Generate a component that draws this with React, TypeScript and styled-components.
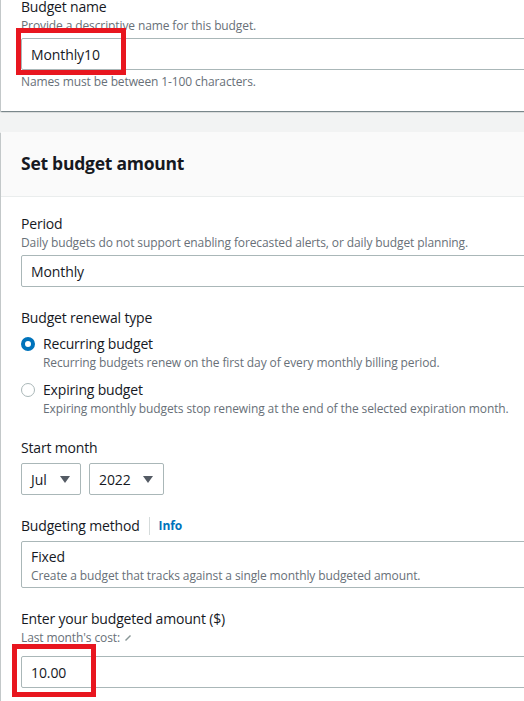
import React from "react";
import styled, { createGlobalStyle } from "styled-components";

const Global = createGlobalStyle`
  html, body {
    margin: 0;
    padding: 0;
    background: #f2f3f3;
    overflow: hidden;
  }
  body {
    font-family: "Open Sans", "Noto Sans", Arial, sans-serif;
    color: #16191f;
    -webkit-font-smoothing: antialiased;
  }
`;

const Page = styled.div`
  width: 640px;
  padding-left: 1px;
  display: flex;
  flex-direction: column;
  gap: 21px;
`;

const Card = styled.section<{ $top?: number }>`
  background: #ffffff;
  margin-top: ${(p) => p.$top ?? 0}px;
  box-shadow: 0 1px 1px 0 rgba(0, 28, 36, 0.3),
    1px 1px 1px 0 rgba(0, 28, 36, 0.15),
    -1px 1px 1px 0 rgba(0, 28, 36, 0.15);
`;

const CardHeader = styled.header`
  height: 64px;
  display: flex;
  align-items: center;
  padding: 0 20px;
  background: #fafafa;
  border-bottom: 1px solid #eaeded;
`;

const Title = styled.h2`
  margin: 0;
  font-size: 17.5px;
  letter-spacing: -0.25px;
  line-height: 24px;
  font-weight: 700;
  color: #16191f;
  transform: translateY(-1px);
`;

const CardBody = styled.div<{ $pt: number; $pb: number }>`
  padding: ${(p) => p.$pt}px 20px ${(p) => p.$pb}px 20px;
  display: flex;
  flex-direction: column;
  gap: 20px;
`;

const Field = styled.div`
  display: flex;
  flex-direction: column;
`;

const LabelRow = styled.div`
  display: flex;
  align-items: center;
`;

const Label = styled.label`
  font-size: 14px;
  letter-spacing: -0.18px;
  line-height: 22px;
  color: #16191f;
`;

const Divider = styled.span`
  width: 1px;
  height: 18px;
  background: #d5dbdb;
  margin: 0 9px 0 9px;
`;

const InfoLink = styled.a`
  font-size: 12px;
  font-weight: 700;
  letter-spacing: -0.1px;
  line-height: 22px;
  color: #0073bb;
  text-decoration: none;
`;

const Desc = styled.div<{ $h?: number }>`
  font-size: 12px;
  letter-spacing: -0.11px;
  line-height: 16px;
  color: #687078;
  display: flex;
  align-items: flex-start;
  gap: 5px;
  height: ${(p) => (p.$h ? `${p.$h}px` : "auto")};
`;

const Constraint = styled.div`
  font-size: 12px;
  letter-spacing: -0.11px;
  line-height: 16px;
  color: #687078;
  margin-top: 4px;
`;

const Control = styled.div`
  position: relative;
  margin-top: 4px;
`;

const Input = styled.div`
  height: 32px;
  box-sizing: border-box;
  border: 1px solid #aab7b8;
  border-radius: 2px;
  padding: 0 9px;
  display: flex;
  align-items: center;
  font-size: 14px;
  letter-spacing: -0.1px;
  color: #16191f;
  background: #fff;
`;

const Highlight = styled.div<{ $l: number; $t: number; $w: number; $h: number }>`
  position: absolute;
  left: ${(p) => p.$l}px;
  top: ${(p) => p.$t}px;
  width: ${(p) => p.$w}px;
  height: ${(p) => p.$h}px;
  box-sizing: border-box;
  border: 5px solid #e8161f;
  pointer-events: none;
`;

const RadioGroup = styled.div`
  display: flex;
  flex-direction: column;
  gap: 8px;
  margin-top: 4px;
`;

const RadioItem = styled.div`
  display: grid;
  grid-template-columns: 14px 1fr;
  column-gap: 8px;
`;

const RadioDot = styled.span<{ $checked?: boolean }>`
  width: 14px;
  height: 14px;
  box-sizing: border-box;
  border-radius: 50%;
  margin-top: 4px;
  border: ${(p) => (p.$checked ? "4px solid #0073bb" : "1px solid #aab7b8")};
  background: #fff;
`;

const RadioText = styled.div`
  display: flex;
  flex-direction: column;
`;

const RadioLabel = styled.span`
  font-size: 14px;
  letter-spacing: -0.18px;
  line-height: 22px;
  color: #16191f;
`;

const SelectRow = styled.div`
  display: flex;
  gap: 8px;
  margin-top: 4px;
`;

const Select = styled.div<{ $w: number }>`
  width: ${(p) => p.$w}px;
  height: 32px;
  box-sizing: border-box;
  border: 1px solid #aab7b8;
  border-radius: 2px;
  padding: 0 10px 0 9px;
  display: flex;
  align-items: center;
  justify-content: space-between;
  font-size: 14px;
  letter-spacing: -0.1px;
  color: #16191f;
`;

const Caret = styled.svg`
  width: 10px;
  height: 7px;
  flex: none;
`;

const Tile = styled.div`
  margin-top: 4px;
  border: 1px solid #aab7b8;
  border-radius: 2px;
  padding: 4px 9px 3px;
  display: flex;
  flex-direction: column;
`;

const TileTitle = styled.span`
  font-size: 14px;
  letter-spacing: -0.1px;
  line-height: 22px;
  color: #16191f;
`;

const PencilIcon = styled.svg`
  width: 6px;
  height: 6px;
  margin-top: 5px;
`;

const CaretIcon = () => (
  <Caret viewBox="0 0 10 7">
    <path d="M0 0 H10 L5 7 Z" fill="#545b64" />
  </Caret>
);

export default function App() {
  return (
    <>
      <Global />
      <Page>
        <Card $top={-24}>
          <CardBody $pt={20} $pb={21}>
            <Field>
              <Label>Budget name</Label>
              <Desc>Provide a descriptive name for this budget.</Desc>
              <Control>
                <Input>Monthly10</Input>
                <Highlight $l={-5} $t={-10} $w={110} $h={47} />
              </Control>
              <Constraint>Names must be between 1-100 characters.</Constraint>
            </Field>
          </CardBody>
        </Card>

        <Card>
          <CardHeader>
            <Title>Set budget amount</Title>
          </CardHeader>
          <CardBody $pt={16} $pb={20}>
            <Field>
              <Label>Period</Label>
              <Desc>
                Daily budgets do not support enabling forecasted alerts, or daily
                budget planning.
              </Desc>
              <Control>
                <Input>Monthly</Input>
              </Control>
            </Field>

            <Field>
              <Label>Budget renewal type</Label>
              <RadioGroup>
                <RadioItem>
                  <RadioDot $checked />
                  <RadioText>
                    <RadioLabel>Recurring budget</RadioLabel>
                    <Desc>
                      Recurring budgets renew on the first day of every monthly
                      billing period.
                    </Desc>
                  </RadioText>
                </RadioItem>
                <RadioItem>
                  <RadioDot />
                  <RadioText>
                    <RadioLabel>Expiring budget</RadioLabel>
                    <Desc>
                      Expiring monthly budgets stop renewing at the end of the
                      selected expiration month.
                    </Desc>
                  </RadioText>
                </RadioItem>
              </RadioGroup>
            </Field>

            <Field>
              <Label>Start month</Label>
              <SelectRow>
                <Select $w={60}>
                  Jul
                  <CaretIcon />
                </Select>
                <Select $w={75}>
                  2022
                  <CaretIcon />
                </Select>
              </SelectRow>
            </Field>

            <Field>
              <LabelRow>
                <Label>Budgeting method</Label>
                <Divider />
                <InfoLink>Info</InfoLink>
              </LabelRow>
              <Tile>
                <TileTitle>Fixed</TileTitle>
                <Desc>
                  Create a budget that tracks against a single monthly budgeted
                  amount.
                </Desc>
              </Tile>
            </Field>

            <Field>
              <Label>Enter your budgeted amount ($)</Label>
              <Desc $h={22}>
                Last month's cost:
                <PencilIcon viewBox="0 0 6 6">
                  <path d="M0.5 5.5 L5.5 0.5" stroke="#879596" strokeWidth="1.4" />
                </PencilIcon>
              </Desc>
              <Control>
                <Input>10.00</Input>
                <Highlight $l={-9} $t={-12} $w={84} $h={53} />
              </Control>
            </Field>
          </CardBody>
        </Card>
      </Page>
    </>
  );
}
